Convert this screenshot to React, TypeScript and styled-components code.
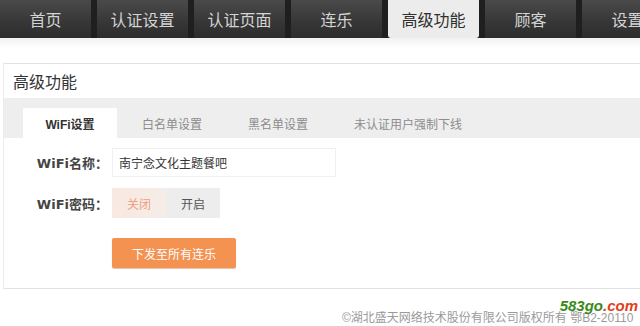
import React, { FunctionComponent } from 'react';
import styled, { createGlobalStyle } from 'styled-components';

const GlobalStyle = createGlobalStyle`
  html, body {
    margin: 0;
    padding: 0;
    background: #ffffff;
    font-family: "Liberation Sans", "Noto Sans CJK SC", sans-serif;
    overflow: hidden;
  }
`;

const Page = styled.div`
  width: 640px;
  height: 326px;
  display: flex;
  flex-direction: column;
  background: #fff;
  overflow: hidden;
`;

const NavBar = styled.nav`
  height: 38px;
  display: flex;
  gap: 6px;
  background: #1f1f1f;
  flex-shrink: 0;
  overflow: hidden;
`;

const NavTab = styled.div<{ $active?: boolean }>`
  width: 91px;
  flex-shrink: 0;
  display: flex;
  align-items: center;
  justify-content: center;
  font-size: 16px;
  color: ${(p) => (p.$active ? '#2f2f2f' : '#d4d4d4')};
  background: ${(p) =>
    p.$active ? '#ececec' : 'linear-gradient(to bottom, #4a4a4a, #363636 60%, #2c2c2c)'};
  border-radius: ${(p) => (p.$active ? '0 0 3px 3px' : '0')};
`;

const Spacer = styled.div`
  height: 25px;
  background: linear-gradient(to bottom, #f1f1f1, #ffffff 40%);
  flex-shrink: 0;
`;

const Panel = styled.section`
  margin-left: 3px;
  border-top: 1px solid #e2e2e2;
  border-left: 1px solid #ececec;
  border-bottom: 1px solid #e2e2e2;
  display: flex;
  flex-direction: column;
`;

const PanelTitle = styled.h3`
  margin: 0;
  height: 34px;
  padding-left: 9px;
  display: flex;
  align-items: center;
  font-size: 16px;
  font-weight: normal;
  color: #333;
`;

const SubTabs = styled.div`
  height: 40px;
  background: #eeeeee;
  display: flex;
  align-items: flex-end;
  padding-left: 19px;
`;

const SubTab = styled.div<{ $active?: boolean }>`
  height: 30px;
  box-sizing: border-box;
  display: flex;
  align-items: center;
  justify-content: center;
  padding: 0 ${(p) => (p.$active ? '0' : '23px')};
  width: ${(p) => (p.$active ? '94px' : 'auto')};
  margin-right: ${(p) => (p.$active ? '2px' : '0')};
  font-size: 12px;
  font-weight: ${(p) => (p.$active ? 'bold' : 'normal')};
  color: ${(p) => (p.$active ? '#333' : '#8c8c8c')};
  background: ${(p) => (p.$active ? '#fff' : 'transparent')};
`;

const Form = styled.div`
  display: flex;
  flex-direction: column;
  gap: 11px;
  padding: 10px 0 20px 0;
`;

const Row = styled.div`
  display: flex;
  align-items: center;
`;

const Label = styled.label`
  width: 108px;
  text-align: right;
  box-sizing: border-box;
  padding-right: 4px;
  font-size: 13px;
  font-weight: bold;
  color: #444;
  font-family: "DejaVu Sans", "Noto Sans CJK SC", sans-serif;
`;

const TextInput = styled.div`
  width: 224px;
  height: 29px;
  box-sizing: border-box;
  border: 1px solid #f0f0f0;
  padding-left: 6px;
  display: flex;
  align-items: center;
  font-size: 12px;
  color: #333;
`;

const Toggle = styled.div`
  display: flex;
  height: 30px;
`;

const ToggleOption = styled.div<{ $on?: boolean }>`
  width: 54px;
  display: flex;
  align-items: center;
  justify-content: center;
  font-size: 12px;
  color: ${(p) => (p.$on ? '#ef9f80' : '#555')};
  background: ${(p) =>
    p.$on ? 'linear-gradient(to right, #f8e8e0, #f5ede8)' : '#ededed'};
`;

const ButtonRow = styled.div`
  padding-left: 108px;
  margin-top: 9px;
`;

const PrimaryButton = styled.button`
  width: 124px;
  height: 30px;
  border: none;
  border-radius: 2px;
  background: #f49252;
  color: #fff;
  font-size: 12px;
  font-family: "Liberation Sans", "Noto Sans CJK SC", sans-serif;
  box-shadow: 0 1px 1px rgba(180, 100, 50, 0.4);
`;

const Footer = styled.footer`
  flex: 1;
  display: flex;
  align-items: flex-end;
  padding: 0 0 1px 342px;
  position: relative;
`;

const Copyright = styled.div`
  font-size: 12px;
  color: #9a9a9a;
  white-space: nowrap;
`;

const Watermark = styled.div`
  position: absolute;
  right: 2px;
  top: 8px;
  font-size: 15px;
  font-weight: bold;
  font-style: italic;
  font-family: "Liberation Sans", sans-serif;
  color: #3a8a1a;
  span {
    color: #e04020;
  }
`;

const navItems = ['首页', '认证设置', '认证页面', '连乐', '高级功能', '顾客', '设置'];
const subTabs = ['WiFi设置', '白名单设置', '黑名单设置', '未认证用户强制下线'];

const App: FunctionComponent = () => {
  return (
    <Page>
      <GlobalStyle />
      <NavBar>
        {navItems.map((item) => (
          <NavTab key={item} $active={item === '高级功能'}>
            {item}
          </NavTab>
        ))}
      </NavBar>
      <Spacer />
      <Panel>
        <PanelTitle>高级功能</PanelTitle>
        <SubTabs>
          {subTabs.map((tab, i) => (
            <SubTab key={tab} $active={i === 0}>
              {tab}
            </SubTab>
          ))}
        </SubTabs>
        <Form>
          <Row>
            <Label>WiFi名称：</Label>
            <TextInput>南宁念文化主题餐吧</TextInput>
          </Row>
          <Row>
            <Label>WiFi密码：</Label>
            <Toggle>
              <ToggleOption $on>关闭</ToggleOption>
              <ToggleOption>开启</ToggleOption>
            </Toggle>
          </Row>
          <ButtonRow>
            <PrimaryButton>下发至所有连乐</PrimaryButton>
          </ButtonRow>
        </Form>
      </Panel>
      <Footer>
        <Copyright>©湖北盛天网络技术股份有限公司版权所有 鄂B2-20110</Copyright>
        <Watermark>
          583go<span>.com</span>
        </Watermark>
      </Footer>
    </Page>
  );
};

export default App;
